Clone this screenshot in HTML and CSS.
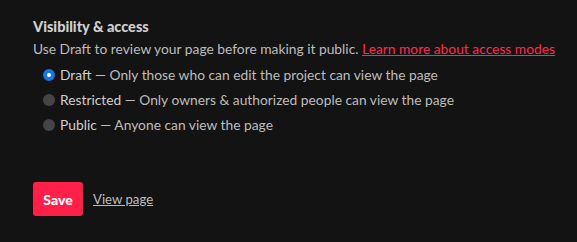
FILE: index.html
```html
<!DOCTYPE html>
<html lang="en">

<head>
    <meta charset="UTF-8">
    <title>Visibility &amp; access</title>
    <link rel="stylesheet" href="styles.css">
</head>

<body>
    <section class="visibility">
        <h2 class="visibility__title">Visibility &amp; access</h2>
        <p class="visibility__desc">Use Draft to review your page before making it public. <a href="#" class="visibility__link">Learn more about access modes</a></p>

        <ul class="visibility__options">
            <li class="option">
                <span class="option__radio option__radio--checked"></span>
                <span class="option__text"><span class="option__name">Draft</span> — Only those who can edit the project can view the page</span>
            </li>
            <li class="option">
                <span class="option__radio"></span>
                <span class="option__text"><span class="option__name">Restricted</span> — Only owners &amp; authorized people can view the page</span>
            </li>
            <li class="option">
                <span class="option__radio"></span>
                <span class="option__text"><span class="option__name">Public</span> — Anyone can view the page</span>
            </li>
        </ul>

        <div class="visibility__actions">
            <button class="btn-save">Save</button>
            <a href="#" class="view-link">View page</a>
        </div>
    </section>
</body>

</html>
```

FILE: styles.css
```css
body {
    margin: 0;
    background: #131313;
    color: #bdbdbd;
    font-family: Lato, "Open Sans", sans-serif;
    font-size: 13.8px;
}

.visibility {
    padding: 16px 12px 16px 33px;
}

.visibility__title {
    margin: 0;
    font-size: 14.5px;
    font-weight: 900;
    color: #d0d0d0;
    line-height: 22px;
}

.visibility__desc {
    margin: 0;
    line-height: 22px;
    white-space: nowrap;
}

.visibility__link {
    color: #ff2a4e;
}

.visibility__options {
    list-style: none;
    margin: 2px 0 0;
    padding: 0 0 0 10px;
}

.option {
    display: flex;
    align-items: center;
    gap: 5px;
    height: 25px;
}

.option__radio {
    display: block;
    flex: none;
    width: 12px;
    height: 12px;
    border-radius: 50%;
    background: #454545;
    box-sizing: border-box;
}

.option__radio--checked {
    background: #fff;
    border: 4px solid #1a74e2;
}

.option__name {
    color: #cfcfcf;
}

.visibility__actions {
    display: flex;
    align-items: center;
    gap: 10px;
    margin-top: 45px;
}

.btn-save {
    width: 50px;
    height: 34px;
    border: none;
    border-radius: 3px;
    background: #ff1f48;
    color: #fff;
    font-family: inherit;
    font-size: 14px;
    font-weight: 900;
    padding: 0;
}

.view-link {
    color: #bdbdbd;
    font-size: 13.2px;
}
```
